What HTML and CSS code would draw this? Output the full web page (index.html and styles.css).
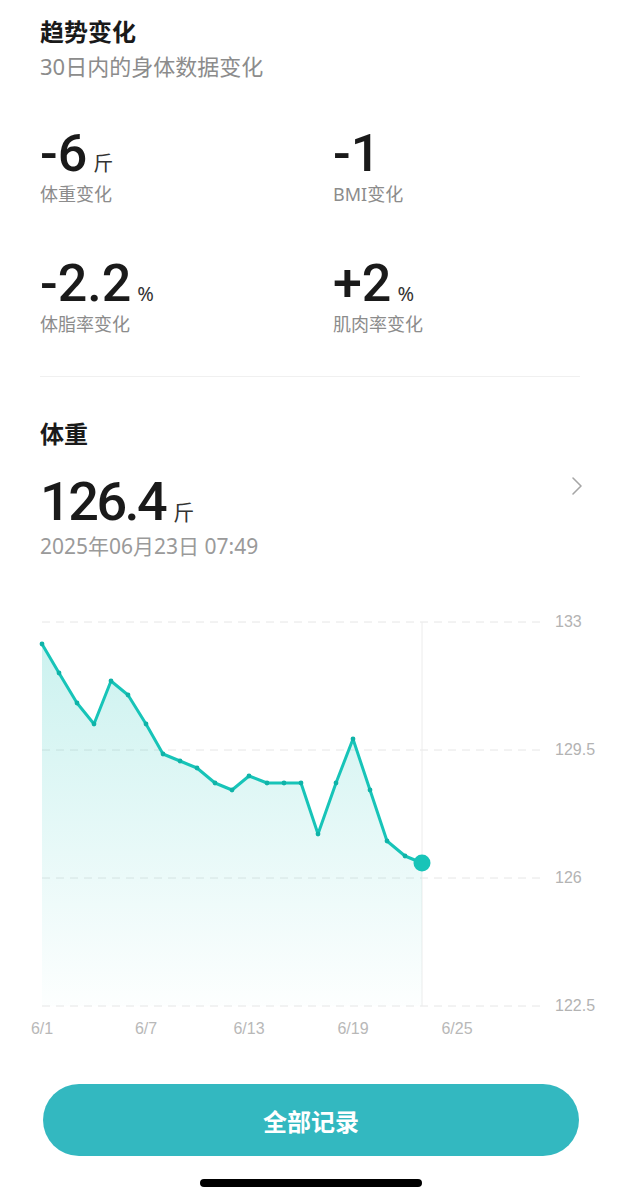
FILE: index.html
```html
<!DOCTYPE html>
<html lang="zh-CN">
<head>
    <meta charset="UTF-8">
    <meta name="viewport" content="width=device-width, initial-scale=1.0">
    <title>趋势变化</title>
    <link rel="stylesheet" href="styles.css">
</head>
<body>
    <!-- 趋势变化 -->
    <section class="trend">
        <h2 class="title">趋势变化</h2>
        <p class="subtitle">30日内的身体数据变化</p>

        <div class="stats">
            <div class="stat">
                <div class="stat-value"><span class="num">-6</span><span class="unit">斤</span></div>
                <div class="stat-label">体重变化</div>
            </div>
            <div class="stat">
                <div class="stat-value"><span class="num">-1</span></div>
                <div class="stat-label">BMI变化</div>
            </div>
            <div class="stat">
                <div class="stat-value"><span class="num">-2.2</span><span class="unit">%</span></div>
                <div class="stat-label">体脂率变化</div>
            </div>
            <div class="stat">
                <div class="stat-value"><span class="num">+2</span><span class="unit">%</span></div>
                <div class="stat-label">肌肉率变化</div>
            </div>
        </div>
    </section>

    <div class="divider"></div>

    <!-- 体重 -->
    <section class="weight">
        <h2 class="title">体重</h2>
        <div class="reading">
            <div class="reading-value"><span class="num big">126.4</span><span class="unit big-unit">斤</span></div>
            <svg class="chevron" width="12" height="20" viewBox="0 0 12 20">
                <path d="M2 2 L10 10 L2 18" fill="none" stroke="#a6a6a6" stroke-width="1.6" stroke-linecap="round" stroke-linejoin="round"/>
            </svg>
        </div>
        <div class="date">2025年06月23日 07:49</div>
    </section>

    <!-- Kurve -->
    <div class="chart">
        <svg width="622" height="470" viewBox="0 0 622 470">
            <defs>
                <linearGradient id="areaFill" x1="0" y1="0" x2="0" y2="1">
                    <stop offset="0" stop-color="#17c4b8" stop-opacity="0.22"/>
                    <stop offset="1" stop-color="#17c4b8" stop-opacity="0.01"/>
                </linearGradient>
            </defs>

            <g class="grid">
                <line x1="42" y1="32" x2="542" y2="32"/>
                <line x1="42" y1="160" x2="542" y2="160"/>
                <line x1="42" y1="288" x2="542" y2="288"/>
                <line x1="42" y1="416" x2="542" y2="416"/>
            </g>
            <line class="cursor" x1="422" y1="32" x2="422" y2="416"/>

            <g class="y-labels">
                <text x="555" y="37">133</text>
                <text x="555" y="165">129.5</text>
                <text x="555" y="293">126</text>
                <text x="555" y="421">122.5</text>
            </g>
            <g class="x-labels">
                <text x="42" y="444">6/1</text>
                <text x="146" y="444">6/7</text>
                <text x="249" y="444">6/13</text>
                <text x="353" y="444">6/19</text>
                <text x="457" y="444">6/25</text>
            </g>

            <polygon fill="url(#areaFill)" points="42,416 42,54 59,83 77,113 94,134 111,91 128,105 146,134 163,164 180,171 197,178 215,193 232,200 249,186 267,193 284,193 301,193 318,244 336,193 353,149 370,200 387,251 405,266 422,273 422,416"/>
            <polyline class="line" points="42,54 59,83 77,113 94,134 111,91 128,105 146,134 163,164 180,171 197,178 215,193 232,200 249,186 267,193 284,193 301,193 318,244 336,193 353,149 370,200 387,251 405,266 422,273"/>

            <g class="dots">
                <circle cx="42" cy="54" r="2.4"/>
                <circle cx="59" cy="83" r="2.4"/>
                <circle cx="77" cy="113" r="2.4"/>
                <circle cx="94" cy="134" r="2.4"/>
                <circle cx="111" cy="91" r="2.4"/>
                <circle cx="128" cy="105" r="2.4"/>
                <circle cx="146" cy="134" r="2.4"/>
                <circle cx="163" cy="164" r="2.4"/>
                <circle cx="180" cy="171" r="2.4"/>
                <circle cx="197" cy="178" r="2.4"/>
                <circle cx="215" cy="193" r="2.4"/>
                <circle cx="232" cy="200" r="2.4"/>
                <circle cx="249" cy="186" r="2.4"/>
                <circle cx="267" cy="193" r="2.4"/>
                <circle cx="284" cy="193" r="2.4"/>
                <circle cx="301" cy="193" r="2.4"/>
                <circle cx="318" cy="244" r="2.4"/>
                <circle cx="336" cy="193" r="2.4"/>
                <circle cx="353" cy="149" r="2.4"/>
                <circle cx="370" cy="200" r="2.4"/>
                <circle cx="387" cy="251" r="2.4"/>
                <circle cx="405" cy="266" r="2.4"/>
            </g>
            <circle class="current" cx="422" cy="273" r="8.5"/>
        </svg>
    </div>

    <button class="all-btn">全部记录</button>

    <div class="home-bar"></div>
</body>
</html>
```

FILE: styles.css
```css
/* Grundlayout */
body {
    margin: 0;
    padding: 0;
    width: 622px;
    background-color: #fff;
    color: #1a1a1a;
    font-family: "Noto Sans", "Noto Sans CJK SC", sans-serif;
}

.title {
    margin: 0;
    font-size: 24px;
    line-height: 32px;
    font-weight: 700;
    color: #1a1a1a;
}

.subtitle {
    margin: 4px 0 0;
    font-size: 22px;
    line-height: 28px;
    color: #8c8c8c;
}

/* Trend-Bereich */
.trend {
    padding: 16px 40px 0;
}

.stats {
    margin-top: 50px;
    display: grid;
    grid-template-columns: 293px 1fr;
    row-gap: 54px;
}

.stat-value {
    display: flex;
    align-items: baseline;
    height: 48px;
}

.num {
    font-family: Roboto, "Noto Sans", sans-serif;
    font-weight: 500;
    font-size: 52px;
    line-height: 48px;
    color: #1a1a1a;
}

.unit {
    margin-left: 6px;
    font-size: 20px;
    color: #333;
}

.stat-label {
    margin-top: 4px;
    font-size: 18px;
    line-height: 24px;
    color: #8c8c8c;
}

.divider {
    margin: 40px 42px 0 40px;
    height: 1px;
    background-color: #f0f0f0;
}

/* Gewicht */
.weight {
    padding: 41px 39px 0 40px;
}

.reading {
    margin-top: 24px;
    display: flex;
    justify-content: space-between;
    align-items: flex-start;
}

.reading-value {
    display: flex;
    align-items: baseline;
}

.num.big {
    font-size: 54px;
    line-height: 56px;
    letter-spacing: -2.5px;
}

.big-unit {
    font-size: 21px;
    margin-left: 8px;
}

.chevron {
    margin-top: 2px;
}

.date {
    margin-top: 2px;
    font-size: 21px;
    line-height: 28px;
    color: #9a9a9a;
}

/* Diagramm */
.chart {
    margin-top: 30px;
}

.chart svg {
    display: block;
}

.grid line {
    stroke: #e6e6e6;
    stroke-width: 1;
    stroke-dasharray: 8 6;
}

.cursor {
    stroke: #ececec;
    stroke-width: 1;
}

.y-labels text {
    font-family: "Liberation Sans", Arial, sans-serif;
    font-size: 16px;
    fill: #b3b3b3;
}

.x-labels text {
    font-family: "Liberation Sans", Arial, sans-serif;
    font-size: 16px;
    fill: #b8b8b8;
    text-anchor: middle;
}

.line {
    fill: none;
    stroke: #17c4b8;
    stroke-width: 3;
    stroke-linejoin: round;
    stroke-linecap: round;
}

.dots circle {
    fill: #0fb3a8;
}

.current {
    fill: #17c4b8;
}

/* Button unten */
.all-btn {
    display: block;
    margin: 24px 43px 0;
    width: 536px;
    height: 72px;
    border: none;
    border-radius: 36px;
    background-color: #33b8c0;
    color: #fff;
    font-family: "Noto Sans CJK SC", sans-serif;
    font-size: 24px;
    font-weight: 700;
    cursor: pointer;
}

.home-bar {
    margin: 23px auto 0;
    width: 222px;
    height: 8px;
    border-radius: 4px;
    background-color: #000;
}
```
